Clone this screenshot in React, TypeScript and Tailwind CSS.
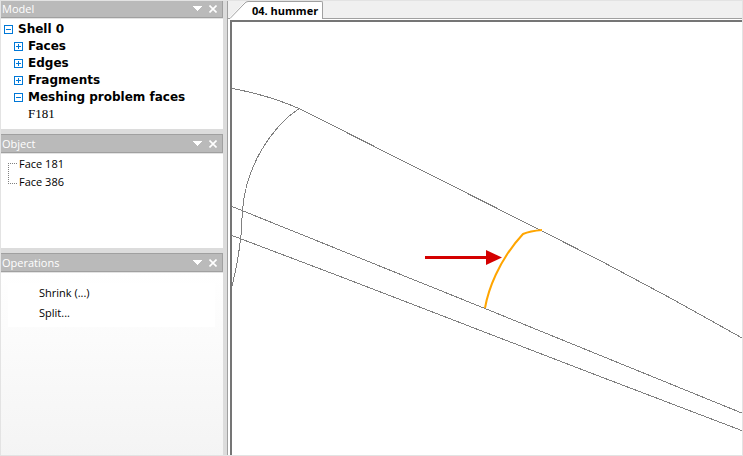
import React, { useState } from "react";

type TreeNode = {
  label: string;
  open: boolean;
  indent: boolean;
};

const initialNodes: TreeNode[] = [
  { label: "Shell 0", open: true, indent: false },
  { label: "Faces", open: false, indent: true },
  { label: "Edges", open: false, indent: true },
  { label: "Fragments", open: false, indent: true },
  { label: "Meshing problem faces", open: true, indent: true },
];

const objects = ["Face 181", "Face 386"];
const operations = ["Shrink (...)", "Split..."];

function PanelHeader({ title }: { title: string }) {
  return (
    <header className="flex h-[19px] shrink-0 items-center border border-l-0 border-[#a0a0a0] bg-[#bababa] pr-px pl-[2px] text-white">
      <h2 className="flex-1 font-['Open_Sans',sans-serif] text-[11px] leading-4">{title}</h2>
      <button type="button" aria-label={`${title} menu`} className="flex h-4 w-4 items-center justify-center">
        <svg width="9" height="5" viewBox="0 0 9 5" fill="currentColor" shapeRendering="crispEdges">
          <path d="M0 0H9V1H8V2H7V3H6V4H5V5H4V4H3V3H2V2H1V1H0Z" />
        </svg>
      </button>
      <button type="button" aria-label={`Close ${title}`} className="flex h-4 w-4 items-center justify-center">
        <svg width="8" height="8" viewBox="0 0 8 8" fill="none" stroke="currentColor" strokeWidth="1.6">
          <path d="M0.5 0.5L7.5 7.5M7.5 0.5L0.5 7.5" />
        </svg>
      </button>
    </header>
  );
}

function Toggle({ open }: { open: boolean }) {
  return (
    <svg width="9" height="9" viewBox="0 0 9 9" fill="none" stroke="#0078d7" shapeRendering="crispEdges">
      <path d="M0.5 0.5H8.5V8.5H0.5Z M2 4.5H7" />
      {!open && <path d="M4.5 2V7" />}
    </svg>
  );
}

function ModelPanel() {
  const [nodes, setNodes] = useState(initialNodes);

  function toggle(label: string) {
    setNodes((list) => list.map((n) => (n.label === label ? { ...n, open: !n.open } : n)));
  }

  return (
    <section className="-mt-px">
      <PanelHeader title="Model" />
      <ul className="h-[111px] border-t border-[#e3e3e3] bg-white pt-[2px] font-['DejaVu_Sans',Verdana,sans-serif] text-[12px] leading-[17px] text-black">
        {nodes.map((n) => (
          <li key={n.label} className={n.indent ? "pl-[14px]" : "pl-1"}>
            <button type="button" className="flex items-center gap-[5px] font-bold" onClick={() => toggle(n.label)}>
              <Toggle open={n.open} />
              {n.label}
            </button>
          </li>
        ))}
        <li className="pl-7 font-['Liberation_Serif',serif] text-[13px] leading-4">F181</li>
      </ul>
    </section>
  );
}

function ObjectPanel() {
  return (
    <section>
      <PanelHeader title="Object" />
      <div className="flex h-[95px] items-start border-t border-[#e3e3e3] bg-white pt-px pl-2">
        <svg width="9" height="36" viewBox="0 0 9 36" fill="none" stroke="#808080" strokeDasharray="1 1" shapeRendering="crispEdges">
          <path d="M0 8.5H9M0.5 8V28M0 28.5H9" />
        </svg>
        <ul className="pl-[2px] font-['Open_Sans',sans-serif] text-[11px] leading-[18px] text-black">
          {objects.map((o) => (
            <li key={o}>{o}</li>
          ))}
        </ul>
      </div>
    </section>
  );
}

function OperationsPanel() {
  return (
    <section className="flex flex-1 flex-col">
      <PanelHeader title="Operations" />
      <div className="flex-1 border-t border-[#e3e3e3] bg-linear-to-b from-white to-[#f4f4f4] px-2 pt-[10px]">
        <ul className="bg-white pb-1 pl-[31px] font-['Open_Sans',sans-serif] text-[11px] leading-5 text-black">
          {operations.map((o) => (
            <li key={o}>
              <button type="button" className="block">{o}</button>
            </li>
          ))}
        </ul>
      </div>
    </section>
  );
}

function TabBar() {
  return (
    <div role="tablist" className="flex h-[19px] shrink-0 bg-[#f0f0f0]">
      <svg width="20" height="19" viewBox="0 0 20 19" fill="none">
        <path d="M0 19L2 17L16 3Q18 1.5 20 1.5V19Z" fill="#fff" />
        <path d="M0 18.5H2L16 4Q18 1.5 20 1.5" stroke="#a0a0a0" />
      </svg>
      <button
        type="button"
        role="tab"
        aria-selected
        className="mt-px rounded-tr-xs border-t border-r border-[#a0a0a0] bg-white px-1 font-['Open_Sans',sans-serif] text-[11px] leading-4 font-bold text-black"
      >
        04. hummer
      </button>
      <div className="flex-1 border-b border-[#a0a0a0]" />
    </div>
  );
}

function Viewport() {
  return (
    <div className="min-h-0 flex-1 pt-px pl-[2px]">
      <div className="h-full border-t-2 border-l-2 border-[#757575] bg-white">
        <svg className="block h-full w-full" viewBox="232 22 511 434" preserveAspectRatio="xMinYMin slice" fill="none">
          <g stroke="#808080" shapeRendering="crispEdges">
            <path d="M232 88.5Q268 95 299 108.5L541 230.5L600 260.5Q672 298 743 338.5" />
            <path d="M299 108.5C272 127 246 165 242.5 210L241 235Q238 263 232 286" />
            <path d="M232 206.5L485 308.5L743 413.5" />
            <path d="M232 235.5L335 274.5L600 376.5L743 431" />
          </g>
          <path d="M485 308C488 291 498 261 523 234Q530 231 542 230" stroke="#ffa500" strokeWidth="2" />
          <path d="M425 257.5H488" stroke="#d40000" strokeWidth="3" />
          <path d="M486 250L502 257.5L486 265Z" fill="#d40000" />
        </svg>
      </div>
    </div>
  );
}

export default function App() {
  return (
    <div className="relative flex h-screen overflow-hidden bg-[#dcdcdc]">
      <aside className="flex w-[223px] shrink-0 flex-col gap-[5px]">
        <ModelPanel />
        <ObjectPanel />
        <OperationsPanel />
      </aside>
      <main className="ml-1 flex min-w-0 flex-1 flex-col border-l border-[#a0a0a0] bg-white">
        <TabBar />
        <Viewport />
      </main>
      <div className="pointer-events-none absolute inset-0 border border-[#e3e3e3]" />
    </div>
  );
}
